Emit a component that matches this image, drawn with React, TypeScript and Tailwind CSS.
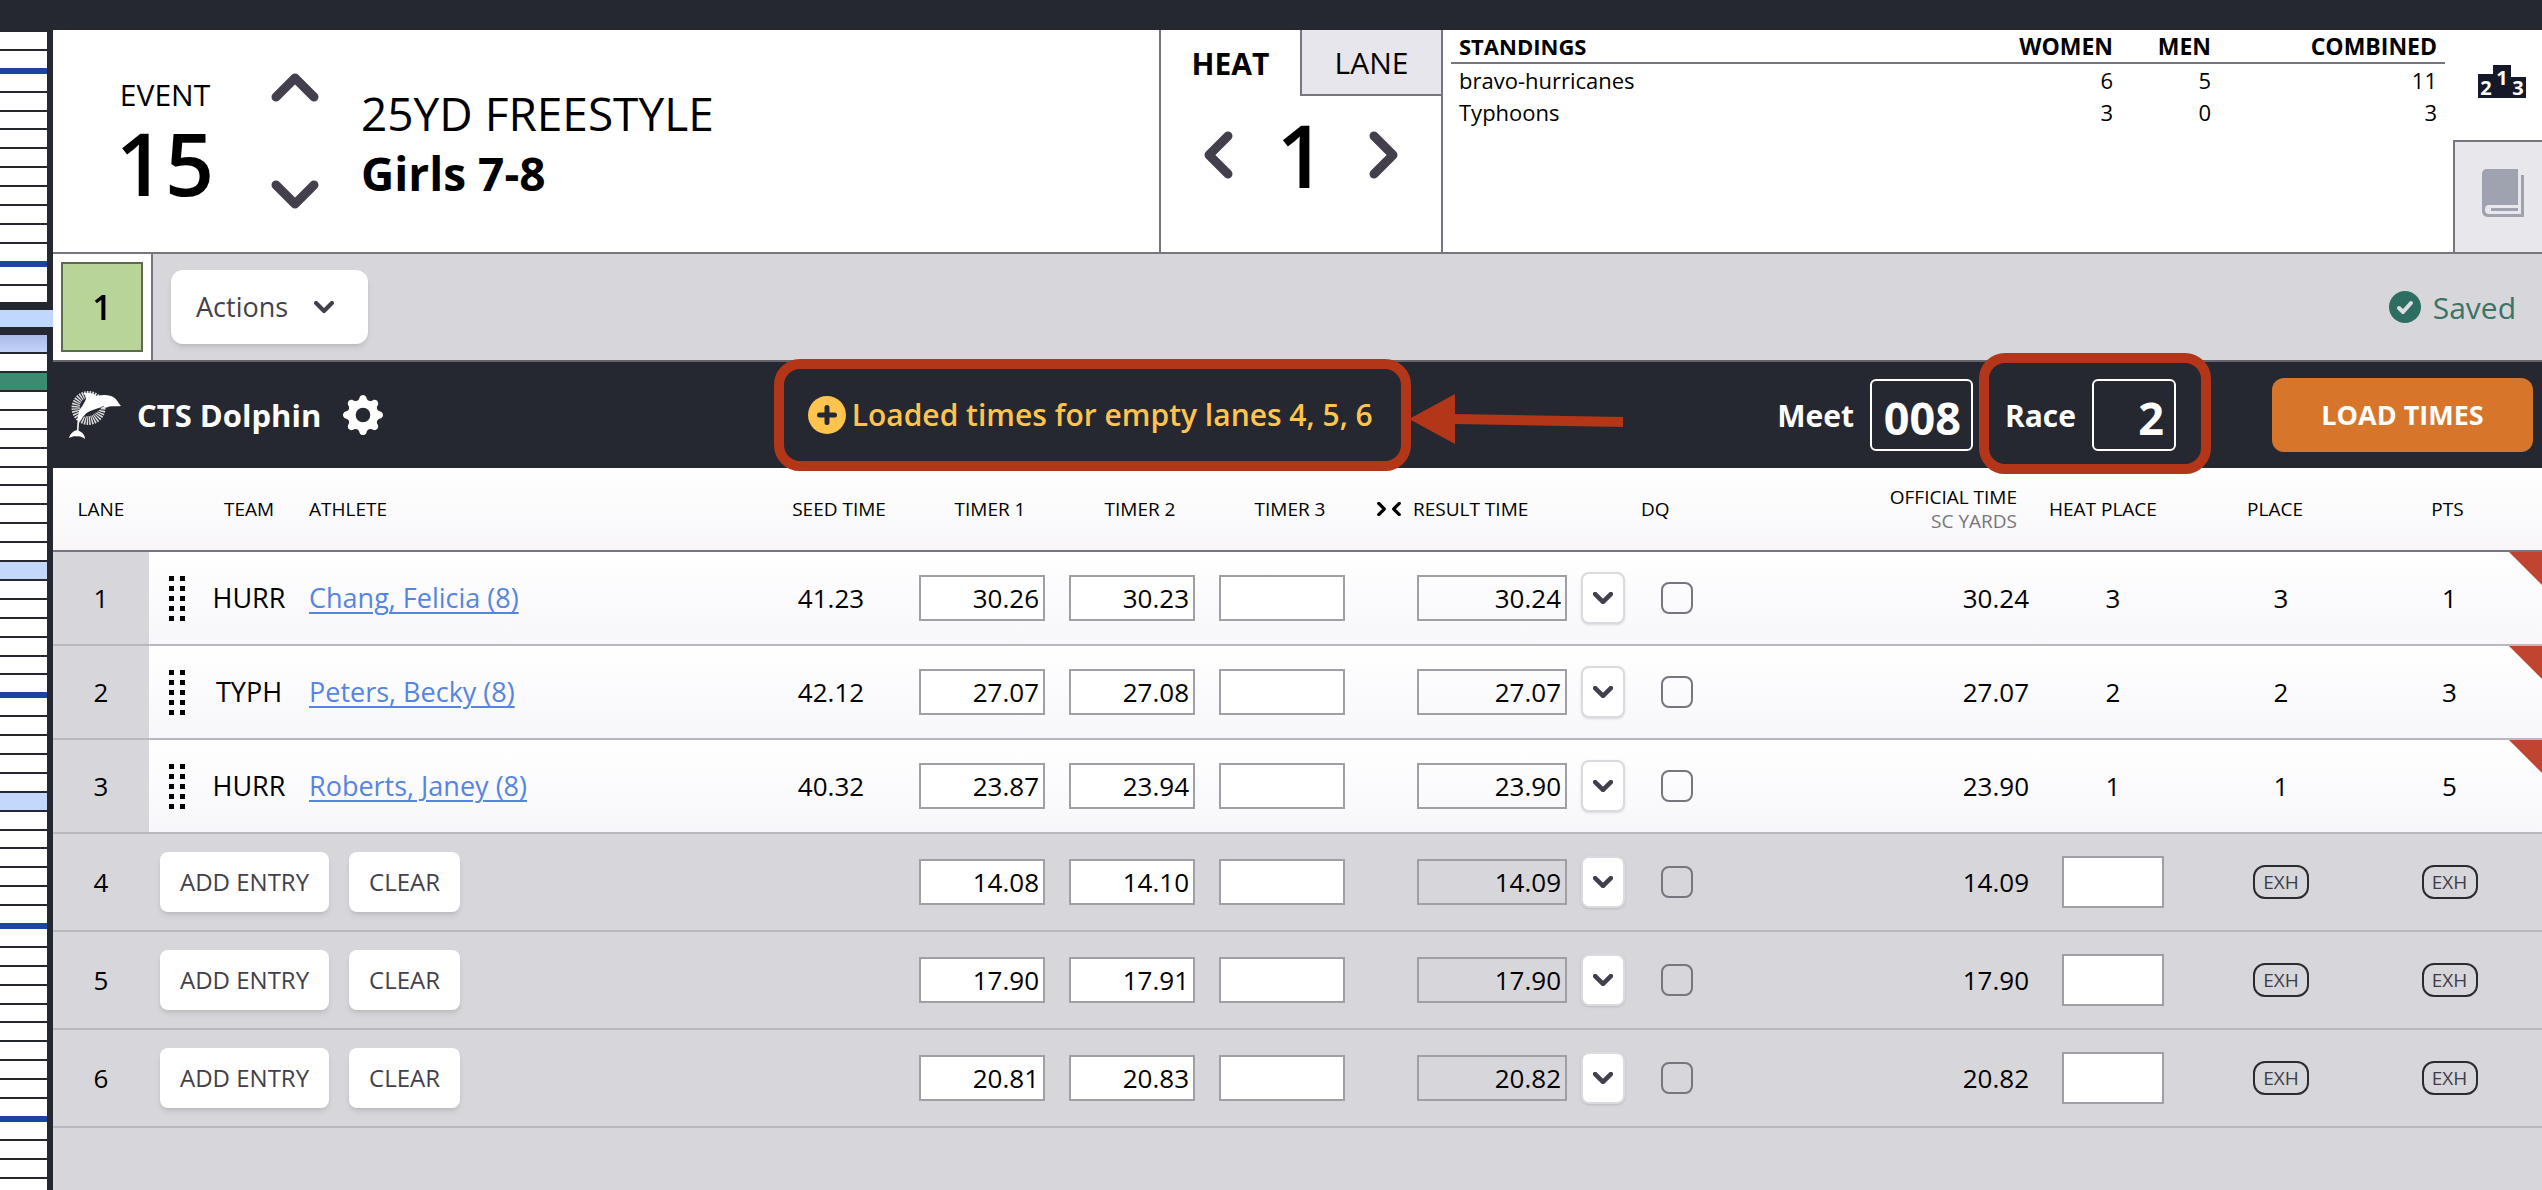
import React, { useState } from "react";
import { BsGearFill } from "react-icons/bs";

type Entry = {
  lane: number;
  team?: string;
  athlete?: string;
  seed?: string;
  timers: string[];
  result: string;
  heatPlace?: number;
  place?: number;
  pts?: number;
};

const entries: Entry[] = [
  {
    lane: 1,
    team: "HURR",
    athlete: "Chang, Felicia (8)",
    seed: "41.23",
    timers: ["30.26", "30.23", ""],
    result: "30.24",
    heatPlace: 3,
    place: 3,
    pts: 1,
  },
  {
    lane: 2,
    team: "TYPH",
    athlete: "Peters, Becky (8)",
    seed: "42.12",
    timers: ["27.07", "27.08", ""],
    result: "27.07",
    heatPlace: 2,
    place: 2,
    pts: 3,
  },
  {
    lane: 3,
    team: "HURR",
    athlete: "Roberts, Janey (8)",
    seed: "40.32",
    timers: ["23.87", "23.94", ""],
    result: "23.90",
    heatPlace: 1,
    place: 1,
    pts: 5,
  },
  { lane: 4, timers: ["14.08", "14.10", ""], result: "14.09" },
  { lane: 5, timers: ["17.90", "17.91", ""], result: "17.90" },
  { lane: 6, timers: ["20.81", "20.83", ""], result: "20.82" },
];

const standings = [
  { team: "bravo-hurricanes", women: 6, men: 5, combined: 11 },
  { team: "Typhoons", women: 3, men: 0, combined: 3 },
];

// one letter per event: w = plain, b = last of a session,
// t = before the selected one, s = selected, v = visited, g = running, l = scored
const eventStrip =
  "wb" + "wwwwwwwwwb" + "wtsvwg" + "wwwwwwwww" + "lwwwwwb" + "wwwwwl" + "wwwwwb" + "wwwwwwwwwb" + "www";

const stripStyles: { [key: string]: string } = {
  w: "w-[47px] bg-white border-b-2 border-[#252830]",
  b: "w-[47px] bg-white border-b-6 border-[#1c45a0]",
  t: "w-[47px] bg-white border-b-8 border-[#252830]",
  s: "w-full bg-[#c0d8fd] border-b-8 border-[#252830]",
  v: "w-[47px] bg-linear-to-b from-[#abb9e6] to-[#c3d4fa] border-b-2 border-[#252830]",
  g: "w-[47px] bg-[#3c8a70] border-b-2 border-[#252830]",
  l: "w-[47px] bg-[#c3d8fa] border-b-2 border-[#252830]",
};

function EventStrip() {
  return (
    <aside className="flex w-[53px] shrink-0 flex-col bg-[#252830] pt-[2px]">
      {eventStrip.split("").map((kind, i) => (
        <div key={i} className={`box-content flex-[3] ${stripStyles[kind]}`} />
      ))}
      <div className="w-[47px] flex-[2] bg-white" />
    </aside>
  );
}

const chevronPoints = {
  up: "5,24 24,5 43,24",
  down: "5,5 24,24 43,5",
  left: "24,5 5,24 24,43",
  right: "5,5 24,24 5,43",
};

function Chevron(props: { direction: keyof typeof chevronPoints; className: string; stroke?: number }) {
  const vertical = props.direction === "up" || props.direction === "down";
  return (
    <svg
      viewBox={vertical ? "0 0 48 29" : "0 0 29 48"}
      className={props.className}
      fill="none"
      stroke="currentColor"
      strokeWidth={props.stroke || 9}
      strokeLinecap="round"
      strokeLinejoin="round"
    >
      <polyline points={chevronPoints[props.direction]} />
    </svg>
  );
}

function PodiumIcon() {
  return (
    <svg viewBox="0 0 48 33" className="h-[33px] w-12 overflow-visible">
      <path d="M0 9H15V0H33V12H48V33H0Z" fill="#151829" />
      <g fill="#fff" fontFamily="Open Sans, sans-serif" fontWeight="700" fontSize="20" textAnchor="middle">
        <text x="8" y="30">2</text>
        <text x="24" y="20">1</text>
        <text x="40" y="30">3</text>
      </g>
    </svg>
  );
}

function BookIcon() {
  return (
    <svg viewBox="0 0 42 48" className="h-12 w-[42px]" fill="#9fa3af">
      <path d="M5 0H36V36H7C4 36 3 38 3 40.500C3 43 4 45 7 45H39V6H42V48H6C2 48 0 45 0 42V5C0 2 2 0 5 0Z" />
      <path d="M9 39H36V42H9Z" />
    </svg>
  );
}

function DolphinIcon() {
  return (
    <svg viewBox="0 0 52 48" className="h-12 w-13">
      <circle cx="19.500" cy="17" r="12.500" fill="none" stroke="#fff" strokeWidth="9" strokeDasharray="1.300 0.900" opacity="0.85" />
      <path
        d="M52 15C49 12 48 7 42 5C37 3.500 32 4 28 5C24 2 18 1 14 2.500C18 5 18 7 16 10C11 15 9 22 8.500 30L8 39C4 40 1 43 0 47C4 45 6 45 8 45.500C11 45 13 46 16 48C16 44 13 41 9.500 39.500L10 32C12 26 16 23 21 21C26 19 31 17 34 15C36 17 38 17 40 15.500C44 15 48 15.500 52 15Z"
        fill="#fff"
      />
      <path d="M15 26C17 20 24 19 33 16C29 22 22 24 15 26Z" fill="#252830" />
      <path d="M11 18C10 13 13 9 17 7C16 11 14 14 11 18Z" fill="#252830" />
    </svg>
  );
}

function EventHeader() {
  const [tab, setTab] = useState("heat");

  const tabStyle = (name: string) =>
    tab === name ? "font-bold" : "bg-[#e7e6ec] border-l-2 border-b-2 border-[#77757d]";

  return (
    <header className="flex min-h-[224px] border-b-2 border-[#77757d] bg-white">
      <div className="flex flex-1 items-center">
        <div className="w-[200px] pt-1 pl-6 text-center">
          <p className="text-[30px] leading-10">EVENT</p>
          <p className="text-[86px] leading-24 font-semibold">15</p>
        </div>
        <div className="flex w-[84px] flex-col items-center gap-[78px] text-[#433f4d]">
          <button aria-label="Previous event">
            <Chevron direction="up" className="h-[29px] w-12" />
          </button>
          <button aria-label="Next event">
            <Chevron direction="down" className="h-[29px] w-12" />
          </button>
        </div>
        <div className="pt-1 pl-6 text-[46px] leading-15">
          <h1>25YD FREESTYLE</h1>
          <h2 className="font-bold">Girls 7-8</h2>
        </div>
      </div>

      <div className="w-[284px] border-x-2 border-[#77757d]">
        <div className="flex h-[66px] text-[30px]">
          <button className={`w-[139px] ${tabStyle("heat")}`} onClick={() => setTab("heat")}>
            HEAT
          </button>
          <button className={`flex-1 ${tabStyle("lane")}`} onClick={() => setTab("lane")}>
            LANE
          </button>
        </div>
        <div className="flex items-center justify-between px-[43px] text-[#433f4d]">
          <button aria-label="Previous heat">
            <Chevron direction="left" className="h-12 w-[29px]" />
          </button>
          <p className="text-[86px] leading-[118px] font-semibold text-black">1</p>
          <button aria-label="Next heat">
            <Chevron direction="right" className="h-12 w-[29px]" />
          </button>
        </div>
      </div>

      <div className="w-[1010px] px-2">
        <table className="w-full table-fixed border-separate border-spacing-0 text-[22px] leading-8">
          <thead>
            <tr className="h-[34px]">
              <th className="border-b-2 border-[#77757d] pl-2 text-left">STANDINGS</th>
              <th className="w-[120px] border-b-2 border-[#77757d] pr-2 text-right text-[23px]">WOMEN</th>
              <th className="w-[98px] border-b-2 border-[#77757d] pr-2 text-right text-[23px]">MEN</th>
              <th className="w-[226px] border-b-2 border-[#77757d] pr-2 text-right text-[23px]">COMBINED</th>
            </tr>
          </thead>
          <tbody>
            {standings.map((s) => (
              <tr key={s.team}>
                <td className="pl-2">{s.team}</td>
                <td className="pr-2 text-right">{s.women}</td>
                <td className="pr-2 text-right">{s.men}</td>
                <td className="pr-2 text-right">{s.combined}</td>
              </tr>
            ))}
          </tbody>
        </table>
      </div>

      <div className="flex w-[89px] flex-col">
        <button className="flex h-[110px] items-center justify-center pb-2 pl-2" aria-label="Standings">
          <PodiumIcon />
        </button>
        <button
          className="flex flex-1 items-center justify-center border-t-2 border-l-2 border-[#77757d] bg-[#e7e7ec] pb-2 pl-2"
          aria-label="Records"
        >
          <BookIcon />
        </button>
      </div>
    </header>
  );
}

function Toolbar() {
  return (
    <div className="flex h-[108px] items-stretch border-b-2 border-[#66656b]">
      <div className="w-[100px] border-r-2 border-[#77757d] bg-white p-2">
        <button className="h-full w-full border-2 border-[#5d6a4e] bg-[#b8d498] text-[34px] font-semibold">1</button>
      </div>
      <div className="flex flex-1 items-center justify-between pr-[26px] pl-[18px]">
        <button className="flex h-[74px] items-center gap-[26px] rounded-xl bg-white pr-[34px] pl-[25px] text-[27px] font-medium text-[#433f4d] shadow-md">
          Actions
          <Chevron direction="down" className="h-[14px] w-5" stroke={10} />
        </button>
        <p className="flex items-center gap-3 text-[30px] text-[#3a7466]">
          <svg viewBox="0 0 32 32" className="size-8">
            <circle cx="16" cy="16" r="16" fill="#2e6e62" />
            <polyline
              points="10,17 14,21 22,12"
              fill="none"
              stroke="#dddde1"
              strokeWidth="4"
              strokeLinecap="round"
              strokeLinejoin="round"
            />
          </svg>
          Saved
        </p>
      </div>
    </div>
  );
}

function Highlight(props: { className: string }) {
  return (
    <span
      className={`pointer-events-none absolute z-10 rounded-[26px] border-10 border-[#b23617] ${props.className}`}
    />
  );
}

function DolphinBar() {
  return (
    <section className="flex h-[106px] items-center justify-between bg-[#252830] pr-[9px] pl-4 text-[30px] font-bold text-white">
      <div className="flex items-center pr-5">
        <DolphinIcon />
        <h3 className="pl-4 text-[31px]">CTS Dolphin</h3>
        <button className="pl-[22px]" aria-label="Dolphin settings">
          <BsGearFill className="size-10" />
        </button>
      </div>

      <div className="relative flex items-center gap-[6px] leading-[42px] font-semibold text-[#ffc44d]">
        <svg viewBox="0 0 38 38" className="size-[38px]">
          <circle cx="19" cy="19" r="19" fill="currentColor" />
          <path d="M19 11.500V26.500M11.500 19H26.500" stroke="#252830" strokeWidth="5" strokeLinecap="round" />
        </svg>
        <p>Loaded times for empty lanes 4, 5, 6</p>
        <Highlight className="-inset-y-[35px] -right-[38px] -left-[34px]" />
        <svg viewBox="0 0 214 50" className="absolute top-0 left-full z-10 ml-9 h-[50px] w-[214px]" fill="#b23617">
          <path d="M0 25L46 0V20L214 23V33L46 30V50Z" />
        </svg>
      </div>

      <div className="flex items-center">
        <label htmlFor="meet">Meet</label>
        <input
          id="meet"
          defaultValue="008"
          className="ml-4 h-18 w-[103px] rounded-md border-2 border-white pt-1 pr-[10px] text-right text-[45px] leading-none"
        />
        <div className="relative ml-8 flex items-center">
          <label htmlFor="race">Race</label>
          <input
            id="race"
            defaultValue="2"
            className="ml-4 h-18 w-[84px] rounded-md border-2 border-white pt-1 pr-[10px] text-right text-[45px] leading-none"
          />
          <Highlight className="-top-[26px] -right-[35px] -bottom-[23px] -left-[26px]" />
        </div>
        <button className="ml-24 h-[74px] w-[261px] rounded-xl bg-[#d7762b] text-[27px]">LOAD TIMES</button>
      </div>
    </section>
  );
}

function TimeInput(props: { value: string; label: string }) {
  return (
    <input
      defaultValue={props.value}
      aria-label={props.label}
      className="block h-[46px] w-[126px] border-2 border-[#a09fa5] bg-white px-1 text-right"
    />
  );
}

function Exh() {
  return (
    <span className="mx-auto flex h-[34px] w-14 items-center justify-center rounded-xl border-2 border-[#2a2a33] text-[19px] leading-none text-[#3d3c46]">
      EXH
    </span>
  );
}

function EntryRow({ entry }: { entry: Entry }) {
  const empty = !entry.athlete;
  const cell = "border-b-2 border-[#b9b8be] p-0";
  const small =
    "h-15 rounded-lg bg-white px-5 text-[24px] font-medium text-[#433f4d] shadow-md";

  return (
    <tr className={empty ? "h-[98px]" : "h-[94px] bg-linear-to-b from-white to-[#f7f6fa]"}>
      <td className={`${cell} bg-[#d7d6da] text-center`}>{entry.lane}</td>
      {empty ? (
        <td className={cell} colSpan={3}>
          <div className="flex gap-5 pl-[11px]">
            <button className={small}>ADD ENTRY</button>
            <button className={small}>CLEAR</button>
          </div>
        </td>
      ) : (
        <>
          <td className={cell}>
            <div className="mx-auto grid w-4 grid-cols-2 gap-x-[6px] gap-y-[5px]">
              {Array.from({ length: 10 }).map((_, i) => (
                <span key={i} className="size-[5px] bg-black" />
              ))}
            </div>
          </td>
          <td className={`${cell} text-center text-[27px]`}>{entry.team}</td>
          <td className={`${cell} text-[27px]`}>
            <a href="#" className="pl-4 text-[#5585e0]">
              <span className="underline decoration-2 underline-offset-4">{entry.athlete}</span>
            </a>
          </td>
        </>
      )}
      <td className={cell}>
        <p className="pr-4 text-center">{entry.seed}</p>
      </td>
      {entry.timers.map((time, i) => (
        <td key={i} className={cell}>
          <div className="flex justify-center pr-4">
            <TimeInput value={time} label={`Lane ${entry.lane} timer ${i + 1}`} />
          </div>
        </td>
      ))}
      <td className={cell}>
        <div className="flex items-center gap-[14px] pl-[52px]">
          <input
            readOnly
            value={entry.result}
            aria-label={`Lane ${entry.lane} result`}
            className="h-[46px] w-[150px] border-2 border-[#a09fa5] px-1 text-right"
          />
          <button
            className="flex h-13 w-11 items-center justify-center rounded-lg border-2 border-[#dbdadf] bg-white text-[#433f4d] shadow-sm"
            aria-label={`Lane ${entry.lane} result options`}
          >
            <Chevron direction="down" className="h-3 w-5" stroke={11} />
          </button>
        </div>
      </td>
      <td className={cell}>
        <input
          type="checkbox"
          aria-label={`Lane ${entry.lane} DQ`}
          className="mx-auto block size-8 appearance-none rounded-lg border-2 border-[#77757d] checked:bg-[#77757d]"
        />
      </td>
      <td className={`${cell} text-right`}>
        <p className="pr-4">{entry.result}</p>
      </td>
      <td className={`${cell} text-center`}>
        {empty ? (
          <input
            aria-label={`Lane ${entry.lane} heat place`}
            className="mx-auto block h-13 w-[102px] border-2 border-[#a09fa5] bg-white text-center"
          />
        ) : (
          entry.heatPlace
        )}
      </td>
      <td className={`${cell} text-center`}>{empty ? <Exh /> : entry.place}</td>
      <td className={`${cell} relative text-center`}>
        <div className="pr-6">{empty ? <Exh /> : entry.pts}</div>
        {!empty && (
          <svg viewBox="0 0 33 33" className="absolute top-0 right-0 size-[33px]">
            <path d="M0 0H33V33Z" fill="#c04430" />
          </svg>
        )}
      </td>
    </tr>
  );
}

function LaneTable() {
  const head = "border-b-2 border-[#77757d] p-0 font-normal";
  return (
    <table className="w-full table-fixed border-separate border-spacing-0 text-[26px] leading-9">
      <colgroup>
        <col className="w-24" />
        <col className="w-14" />
        <col className="w-[88px]" />
        <col />
        <col className="w-[152px]" />
        <col className="w-[150px]" />
        <col className="w-[150px]" />
        <col className="w-[150px]" />
        <col className="w-[264px]" />
        <col className="w-24" />
        <col className="w-80" />
        <col className="w-[136px]" />
        <col className="w-[200px]" />
        <col className="w-[161px]" />
      </colgroup>
      <thead>
        <tr className="h-[84px] bg-linear-to-b from-white to-[#f8f6f9] text-[19px] leading-6">
          <th className={head}>LANE</th>
          <th className={head}></th>
          <th className={head}>TEAM</th>
          <th className={`${head} text-left`}>
            <span className="pl-4">ATHLETE</span>
          </th>
          <th className={head}>SEED TIME</th>
          <th className={head}>TIMER 1</th>
          <th className={head}>TIMER 2</th>
          <th className={head}>TIMER 3</th>
          <th className={head}>
            <div className="flex items-center gap-3 pl-3">
              <span className="flex w-6 justify-between">
                <Chevron direction="right" className="h-[14px] w-[9px]" stroke={11} />
                <Chevron direction="left" className="h-[14px] w-[9px]" stroke={11} />
              </span>
              RESULT TIME
            </div>
          </th>
          <th className={`${head} text-left`}>
            <span className="pl-3">DQ</span>
          </th>
          <th className={`${head} text-right`}>
            <p className="pr-7">OFFICIAL TIME</p>
            <p className="pr-7 text-[#77757d]">SC YARDS</p>
          </th>
          <th className={`${head} text-left`}>
            <span className="pl-1">HEAT PLACE</span>
          </th>
          <th className={head}>
            <p className="pr-3">PLACE</p>
          </th>
          <th className={head}>
            <p className="pr-7">PTS</p>
          </th>
        </tr>
      </thead>
      <tbody>
        {entries.map((entry) => (
          <EntryRow key={entry.lane} entry={entry} />
        ))}
      </tbody>
    </table>
  );
}

export default function App() {
  return (
    <div className="flex min-h-screen flex-col bg-[#d7d6da] font-['Open_Sans','Noto_Sans',sans-serif] text-black">
      <div className="h-[30px] bg-[#252830]" />
      <div className="flex flex-1">
        <EventStrip />
        <main className="min-w-0 flex-1">
          <EventHeader />
          <Toolbar />
          <DolphinBar />
          <LaneTable />
        </main>
      </div>
    </div>
  );
}
